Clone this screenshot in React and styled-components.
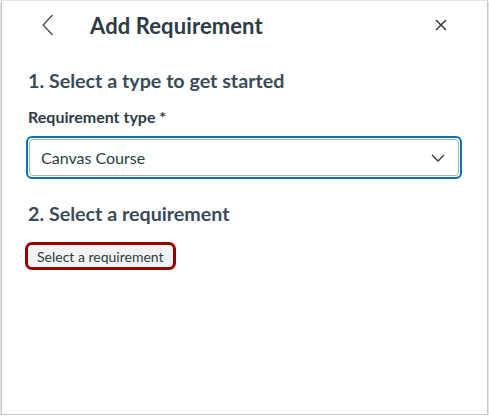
import React from "react";
import styled, { createGlobalStyle } from "styled-components";

const Global = createGlobalStyle`
  html, body { margin: 0; padding: 0; background: #ffffff; }
  body { font-family: Lato, "Noto Sans", sans-serif; color: #2d3b45; }
  * { box-sizing: border-box; }
`;

const Panel = styled.div`
  margin-left: 1px;
  width: 487px;
  height: 415px;
  border: 1px solid #c8c8c8;
  border-top-color: #e6e6e6;
  box-shadow: 0 2px 2px rgba(0, 0, 0, 0.35);
  background: #fff;
  display: flex;
  flex-direction: column;
`;

const Header = styled.div`
  height: 48px;
  display: flex;
  align-items: center;
  padding: 0 34px 0 34px;
`;

const IconButton = styled.button`
  border: none;
  background: none;
  padding: 0;
  width: 24px;
  height: 24px;
  display: flex;
  align-items: center;
  justify-content: center;
  color: #2d3b45;
  cursor: pointer;
`;

const Title = styled.h1`
  margin: 0 0 0 30px;
  font-size: 22px;
  font-weight: 700;
  color: #2d3b45;
  flex: 1;
  letter-spacing: 0.1px;
`;

const Body = styled.div`
  padding: 19px 25px 0 24px;
  display: flex;
  flex-direction: column;
`;

const Heading = styled.h2`
  margin: 0 0 0 2px;
  font-size: 19.7px;
  font-weight: 700;
  color: #394b58;
  line-height: 26px;
`;

const Label = styled.label`
  margin: 13px 0 0 2px;
  font-size: 16px;
  font-weight: 700;
  color: #2d3b45;
  line-height: 20px;
`;

const SelectRing = styled.div`
  margin-top: 9px;
  width: 436px;
  height: 43px;
  border: 2px solid #0374b5;
  border-radius: 6px;
  padding: 1px;
`;

const SelectBox = styled.div`
  height: 100%;
  border: 1px solid #a5afb5;
  border-radius: 4px;
  display: flex;
  align-items: center;
  justify-content: space-between;
  padding: 0 13px 0 11px;
  font-size: 16px;
  color: #2d3b45;
`;

const Spacer = styled.div`
  height: ${(p) => p.h}px;
`;

const ActionButton = styled.button`
  margin-top: 15px;
  margin-left: -1px;
  align-self: flex-start;
  height: 28px;
  padding: 0 9px;
  border: 3px solid #960000;
  border-radius: 7px;
  background: #f2f4f4;
  font-family: Lato, "Noto Sans", sans-serif;
  font-size: 14px;
  color: #2d3b45;
`;

export default function App() {
  return (
    <>
      <Global />
      <Panel>
        <Header>
          <IconButton aria-label="Back">
            <svg width="12" height="22" viewBox="0 0 12 22" fill="none">
              <path d="M10.5 1 L1.2 11 L10.5 21" stroke="#3d4a55" strokeWidth="1.3" />
            </svg>
          </IconButton>
          <Title>Add Requirement</Title>
          <IconButton aria-label="Close">
            <svg width="12" height="12" viewBox="0 0 12 12" fill="none">
              <path d="M1 1 L11 11 M11 1 L1 11" stroke="#2d3b45" strokeWidth="1.5" />
            </svg>
          </IconButton>
        </Header>
        <Body>
          <Heading>1. Select a type to get started</Heading>
          <Label>Requirement type *</Label>
          <SelectRing>
            <SelectBox>
              <span>Canvas Course</span>
              <svg width="14" height="8" viewBox="0 0 14 8" fill="none">
                <path d="M1 1 L7 7 L13 1" stroke="#2d3b45" strokeWidth="1.4" />
              </svg>
            </SelectBox>
          </SelectRing>
          <Spacer h={22} />
          <Heading>2. Select a requirement</Heading>
          <ActionButton>Select a requirement</ActionButton>
        </Body>
      </Panel>
    </>
  );
}
